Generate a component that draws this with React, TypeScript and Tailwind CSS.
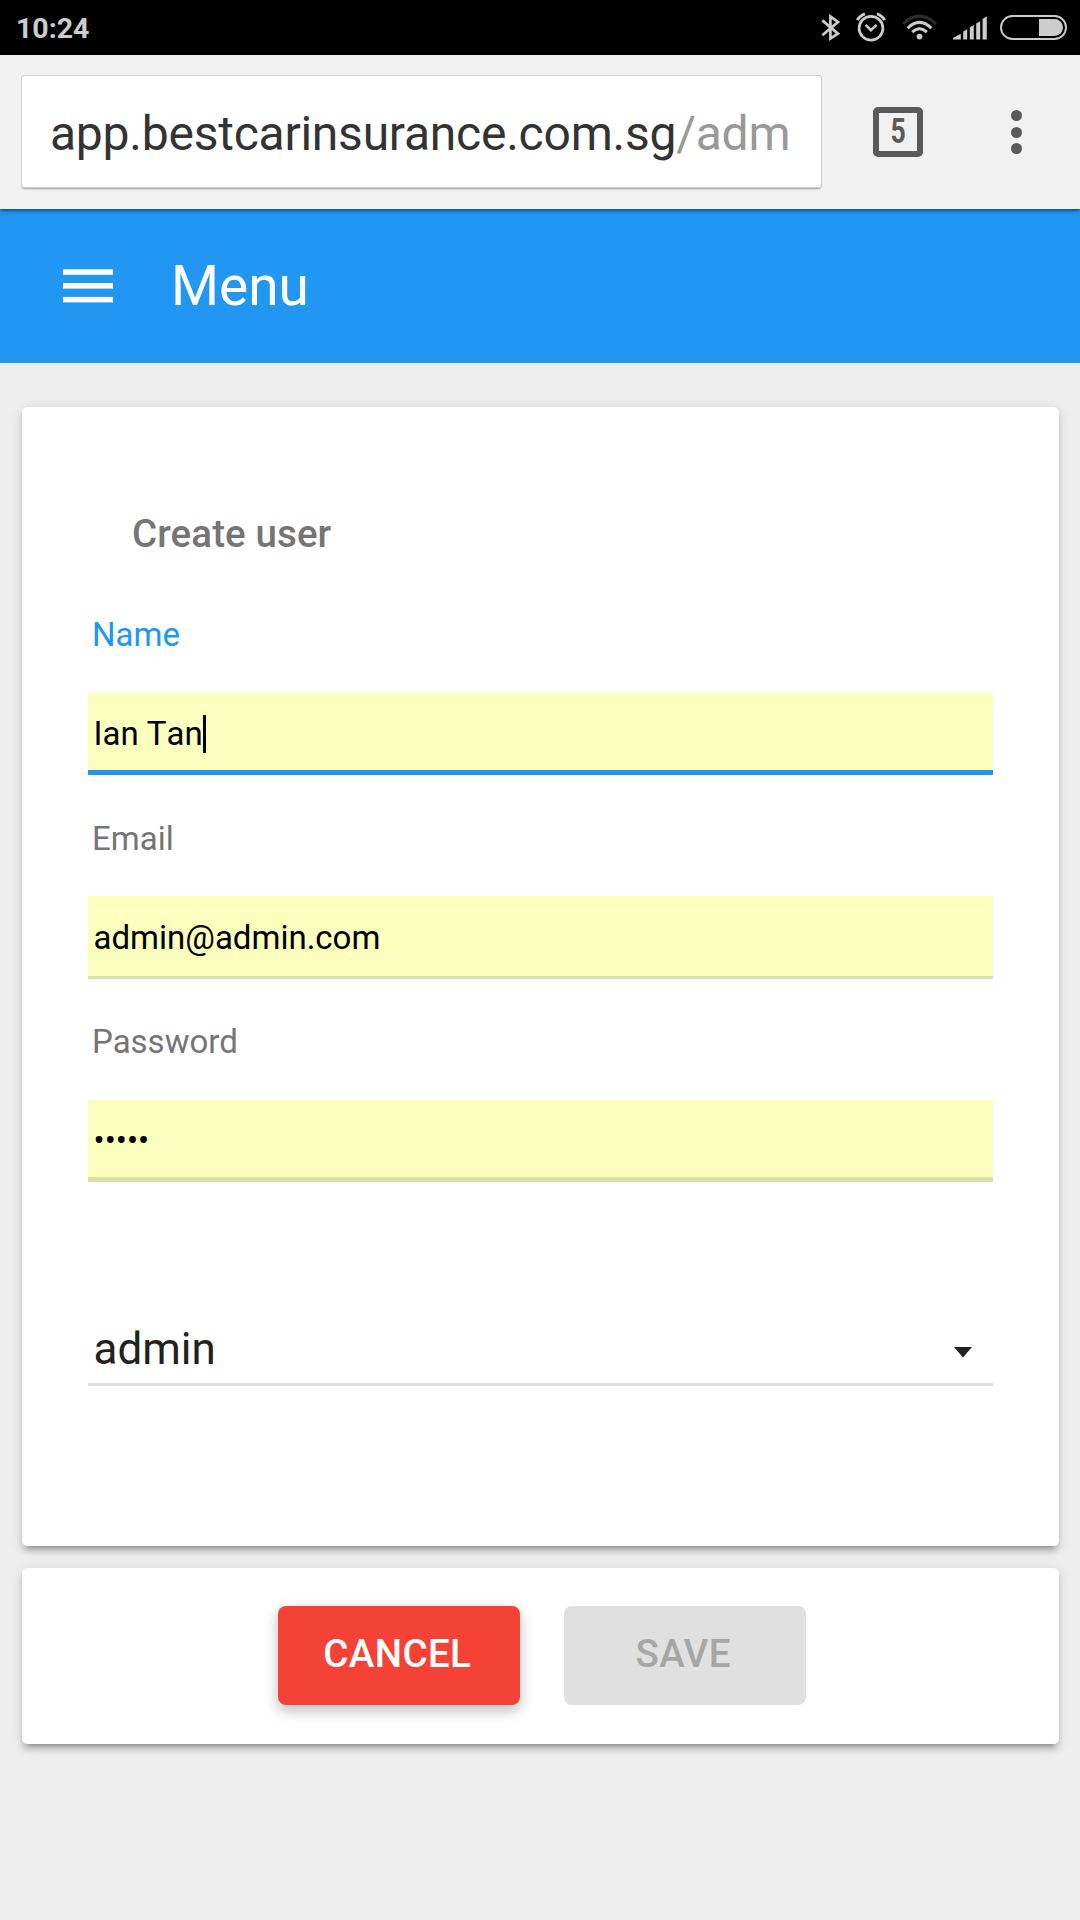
import React from "react";

function StatusIcons() {
  return (
    <svg width="280" height="55" viewBox="0 0 280 55" className="block" fill="none">
      <g stroke="#cccccc" strokeWidth="2.7">
        <path d="M22.3 20.4 L38 33.6 L30.4 38.6 V16.4 L38 22 L22.3 35.2" />
      </g>
      <g stroke="#cccccc">
        <circle cx="71" cy="28.2" r="11.9" strokeWidth="2.7" />
        <path d="M65.6 24.8 L70.9 30.2 L76.6 24.8" strokeWidth="2.5" />
        <path d="M57.3 20.2 Q59.5 15.8 65 13.8 M84.7 20.2 Q82.5 15.8 77 13.8" strokeWidth="2.9" />
      </g>
      <circle cx="119.5" cy="36.6" r="2.9" fill="#cccccc" />
      <g strokeWidth="3">
        <path d="M103 23.9 Q119.5 8.3 136 23.9" stroke="#2c2c2c" />
        <path d="M107.6 28.2 Q119.5 16.6 131.4 28.2" stroke="#cccccc" />
        <path d="M112.2 32.2 Q119.5 25.4 126.8 32.2" stroke="#cccccc" />
      </g>
      <g fill="#cccccc">
        <path d="M153 39.6 V38 L160.8 33.8 V39.6 Z" />
        <path d="M163.2 39.6 V31.6 L167.2 29.2 V39.6 Z" />
        <path d="M169.8 39.6 V27.2 L173.8 25 V39.6 Z" />
        <path d="M176.2 39.6 V23.4 L180.2 21.2 V39.6 Z" />
        <path d="M182.6 39.6 V19 L186.8 16.2 V39.6 Z" />
      </g>
      <rect x="201" y="16" width="65" height="23" rx="11.5" stroke="#cccccc" strokeWidth="1.9" />
      <path d="M239 19 H254.5 A8.5 8.5 0 0 1 254.5 36 H239 Z" fill="#cccccc" />
    </svg>
  );
}

function StatusBar() {
  return (
    <div className="flex h-[55px] items-center justify-between bg-black pl-[16px]">
      <span className="pt-[2px] text-[28.5px] leading-[56px] font-bold text-[#cccccc]">10:24</span>
      <StatusIcons />
    </div>
  );
}

function BrowserBar() {
  return (
    <div className="relative flex h-[154px] items-start bg-[#f1f1f1] pt-[21px] pl-[22px] shadow-[0_1px_4px_rgba(0,0,0,0.7)]">
      <div className="flex h-[111px] w-[799px] items-center rounded-[3px] bg-white pt-[5px] pl-[28px] shadow-[0_0_0_1px_#cfcfcf,0_2px_2px_rgba(0,0,0,0.35)]">
        <span className="text-[48px] leading-[60px] tracking-[-0.24px] whitespace-nowrap text-[#333333]">
          app.bestcarinsurance.com.sg<span className="text-[#999999]">/adm</span>
        </span>
      </div>
      <div className="mt-[31px] ml-[52px] flex h-[50px] w-[50px] items-center justify-center rounded-[5px] border-[6px] border-[#5a5a5a]">
        <span className="origin-center scale-x-[0.76] text-[35px] leading-[38px] font-bold text-[#5a5a5a]">5</span>
      </div>
      <div className="mt-[34px] ml-[88px] flex flex-col gap-[5.5px]">
        <i className="h-[11px] w-[11px] rounded-full bg-[#5a5a5a]" />
        <i className="h-[11px] w-[11px] rounded-full bg-[#5a5a5a]" />
        <i className="h-[11px] w-[11px] rounded-full bg-[#5a5a5a]" />
      </div>
    </div>
  );
}

function AppHeader() {
  return (
    <header className="flex h-[154px] items-center bg-[#2196f3] pl-[63px]">
      <svg width="50" height="34" viewBox="0 0 50 34" fill="#ffffff">
        <rect y="0.3" width="50" height="5.5" />
        <rect y="14.1" width="50" height="5.5" />
        <rect y="27.9" width="50" height="5.5" />
      </svg>
      <h1 className="ml-[58px] text-[55px] leading-[64px] text-white">Menu</h1>
    </header>
  );
}

type FieldProps = {
  label: string;
  value: string;
  labelClass: string;
  lineClass: string;
  focused?: boolean;
};

function Field({ label, value, labelClass, lineClass, focused }: FieldProps) {
  return (
    <div className="h-[203.5px]">
      <div className={`pl-[4px] text-[33px] leading-[44px] ${labelClass}`}>{label}</div>
      <div className="relative mt-[35.8px] flex h-[82.6px] items-center bg-[#faffbd] pl-[5.5px]">
        <span className="text-[33px] leading-[44px] text-black [font-kerning:none]">{value}</span>
        {focused && <i className="h-[38px] w-[3px] bg-black" />}
        <i className={`absolute inset-x-0 bottom-0 ${lineClass}`} />
      </div>
    </div>
  );
}

export default function App() {
  return (
    <div className="h-[1920px] w-[1080px] overflow-hidden bg-[#eeeeee] font-[Roboto,sans-serif]">
      <StatusBar />
      <BrowserBar />
      <AppHeader />
      <main className="flex flex-col gap-[22px] pt-[44px] pr-[21.5px] pl-[22px]">
        <section className="h-[1138.5px] rounded-[5.5px] bg-white pt-[104.5px] pr-[66px] pl-[66px] shadow-[0_5.5px_5.5px_0_rgba(0,0,0,0.14),0_8.25px_2.75px_-5.5px_rgba(0,0,0,0.2),0_2.75px_13.75px_0_rgba(0,0,0,0.12)]">
          <h2 className="mb-[57.5px] pl-[44px] text-[38.5px] leading-[44px] font-medium tracking-[0.1px] text-[#757575]">
            Create user
          </h2>
          <Field label="Name" value="Ian Tan" labelClass="text-[#2196f3]" lineClass="h-[5.5px] bg-[#2196f3]" focused />
          <Field label="Email" value="admin@admin.com" labelClass="text-[#757575]" lineClass="h-[2.75px] bg-[#dcdfa6]" />
          <Field label="Password" value="•••••" labelClass="text-[#757575]" lineClass="h-[5.5px] bg-[#dcdfa6]" />
          <div className="mt-[89px] flex h-[73px] items-center justify-between border-b-[3px] border-[#e0e0e0] pr-[21px] pl-[5.5px]">
            <span className="pt-[3px] text-[44px] leading-[52px] text-[#212121]">admin</span>
            <svg width="18" height="11" viewBox="0 0 18 11" className="mt-[9px]">
              <path d="M0 0 H18 L9 10.5 Z" fill="#212121" />
            </svg>
          </div>
        </section>
        <section className="flex h-[176px] items-center justify-center gap-[44px] rounded-[5.5px] bg-white pl-[3px] shadow-[0_5.5px_5.5px_0_rgba(0,0,0,0.14),0_8.25px_2.75px_-5.5px_rgba(0,0,0,0.2),0_2.75px_13.75px_0_rgba(0,0,0,0.12)]">
          <button className="h-[99px] w-[242px] rounded-[8px] bg-[#f44336] pr-[3px] pb-[4px] text-[38.5px] leading-[44px] font-medium tracking-[0.4px] text-white shadow-[0_5.5px_13.75px_0_rgba(0,0,0,0.26)]">
            CANCEL
          </button>
          <button className="h-[99px] w-[242px] rounded-[8px] bg-[#e0e0e0] pr-[3px] pb-[4px] text-[38.5px] leading-[44px] font-medium tracking-[0.4px] text-[#a6a6a6]">
            SAVE
          </button>
        </section>
      </main>
    </div>
  );
}
